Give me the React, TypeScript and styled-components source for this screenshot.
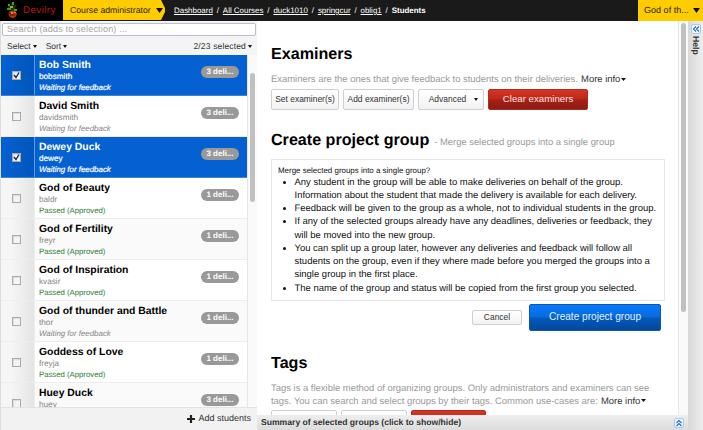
import React from "react";
import styled, { createGlobalStyle, css } from "styled-components";

const GlobalStyle = createGlobalStyle`
  * { box-sizing: border-box; }
  html, body { margin: 0; padding: 0; overflow: hidden; }
  body {
    font: 9.45px/13.2px "Liberation Sans", Arial, sans-serif;
    color: #222;
    background: #fff;
    text-rendering: geometricPrecision;
  }
`;

const Page = styled.div`
  width: 703px;
  height: 430px;
  display: flex;
  flex-direction: column;
  overflow: hidden;
  white-space: nowrap;
`;

const Header = styled.header`
  flex: 0 0 20px;
  display: flex;
  background: #1a1a1a;
  line-height: 20px;
`;

const Brand = styled.div`
  width: 63px;
  display: flex;
  background: #000;
  color: #b31616;
  font: 9.3px/21px "DejaVu Sans", sans-serif;
  svg { margin: 1px 4px 0 6px; flex: none; }
`;

const RoleTab = styled.div`
  width: 103px;
  padding: 0 0 1px 7px;
  display: flex;
  align-items: center;
  color: #2a2200;
  font-size: 8.7px;
  line-height: 19px;
  background: #fc0;
  clip-path: polygon(0 0, 98px 0, 102px 8px, 102px 12px, 98px 20px, 0 20px);
  svg { margin-left: 5px; }
`;

const Crumbs = styled.nav`
  flex: 1;
  padding-left: 8px;
  color: #fff;
  font-size: 7.95px;
  line-height: 21px;
  a { text-decoration: underline; }
  span { padding: 0 3.9px; }
`;

const UserTab = styled.div`
  width: 65px;
  padding: 0 0 1px 6px;
  display: flex;
  align-items: center;
  background: #fc0;
  color: #2a2200;
  font-size: 9.05px;
  line-height: 19px;
  svg { margin-left: 4px; }
`;

const Body = styled.div`
  flex: 1;
  min-height: 0;
  display: flex;
`;

const Sidebar = styled.aside`
  width: 257px;
  display: flex;
  flex-direction: column;
  background: #f4f4f4;
  border-left: 1px solid #ddd;
`;

const Search = styled.div`
  height: 13px;
  margin: 2px 1px 0;
  padding-left: 4px;
  border: 1px solid #b9bdcd;
  border-radius: 2px;
  background: #fff;
  color: #a5a5a5;
  font-size: 9.1px;
  line-height: 11px;
  letter-spacing: 0.15px;
`;

const Toolbar = styled.div`
  height: 20px;
  margin-bottom: -1px;
  padding: 1px 5px 0 6px;
  display: flex;
  align-items: center;
  gap: 9px;
  color: #333;
  font-size: 8.5px;
  > :last-child { margin-left: auto; letter-spacing: 0.15px; }
`;

const MenuLabel = styled.span`
  display: flex;
  align-items: center;
  svg { margin-left: 2px; }
`;

const ListArea = styled.div`
  flex: 1;
  min-height: 0;
  display: flex;
  overflow: hidden;
`;

const Rows = styled.div`
  width: 246px;
`;

const Row = styled.div<{ $selected: boolean; $alt: boolean }>`
  height: 41px;
  display: flex;
  border-bottom: 1px solid ${(p) => (p.$selected ? "#3c84d4" : "#ededed")};
  background: ${(p) => (p.$selected ? "#0561d2" : p.$alt ? "#fafafa" : "#fff")};
`;

const CheckCell = styled.div<{ $selected: boolean }>`
  width: 34px;
  display: flex;
  align-items: center;
  justify-content: center;
  padding-right: 2px;
  border-right: 1px solid ${(p) => (p.$selected ? "#5c9be6" : "#eee")};
  background: ${(p) =>
    p.$selected
      ? "linear-gradient(90deg, #0561d2, #0056bb)"
      : "linear-gradient(90deg, #f6f6f6 30%, #e4e4e4)"};
`;

const Box = styled.div`
  width: 9px;
  height: 9px;
  border: 1px solid #aaa;
  box-shadow: inset 1px 1px 1px #ddd;
  background: #f4f4f4;
  svg { display: block; }
`;

const Person = styled.div<{ $selected: boolean }>`
  flex: 1;
  padding: 4px 0 0 4px;
  color: ${(p) => (p.$selected ? "#fff" : "#858585")};
  font-size: 8.2px;
  line-height: 11px;
  -webkit-text-stroke: ${(p) => (p.$selected ? "0.2px #fff" : "0")};
`;

const Name = styled.div<{ $selected: boolean }>`
  height: 12px;
  color: ${(p) => (p.$selected ? "#fff" : "#000")};
  font-size: 10.4px;
  font-weight: bold;
  line-height: 13px;
  -webkit-text-stroke: 0;
`;

const Username = styled.div`
  height: 11px;
  line-height: 12px;
`;

const Status = styled.div<{ $passed: boolean }>`
  font-size: ${(p) => (p.$passed ? "7.75px" : "7.9px")};
  font-style: ${(p) => (p.$passed ? "normal" : "italic")};
  ${(p) => p.$passed && "color: #2c7d32;"}
`;

const Badge = styled.div`
  width: 38px;
  height: 12px;
  margin: 11px 8px 0 0;
  border-radius: 6px;
  background: #999;
  color: #fff;
  font-size: 8px;
  font-weight: bold;
  line-height: 12px;
  text-align: center;
`;

const Track = styled.div<{ $w: number; $top: number }>`
  width: ${(p) => p.$w}px;
  padding-top: ${(p) => p.$top}px;
  display: flex;
  justify-content: center;
  background: #fafafa;
  border-left: 1px solid #e6e6e6;
`;

const Thumb = styled.div<{ $h: number }>`
  width: 5px;
  height: ${(p) => p.$h}px;
  border-radius: 3px;
  background: #c1c1c1;
`;

const SideFooter = styled.div`
  height: 23px;
  padding-right: 6px;
  display: flex;
  align-items: center;
  justify-content: flex-end;
  gap: 3px;
  border-top: 1px solid #e3e3e3;
  background: #f2f2f2;
  color: #333;
  font-size: 9px;
`;

const Main = styled.main`
  width: 431px;
  display: flex;
  flex-direction: column;
`;

const ScrollArea = styled.div`
  flex: 1;
  min-height: 0;
  display: flex;
  overflow: hidden;
`;

const Content = styled.div`
  width: 421px;
  height: 395px;
  overflow: hidden;
  padding: 23px 13px 0 14px;
`;

const Heading = styled.h2<{ $top?: number }>`
  height: 20px;
  margin: ${(p) => p.$top ?? 0}px 0 0;
  color: #000;
  font-size: 16.1px;
  line-height: 20px;
  small {
    margin-left: 5px;
    color: #999;
    font-size: 9.4px;
    font-weight: normal;
  }
`;

const Intro = styled.p`
  margin: 9px 0 0;
  color: #999;
`;

const More = styled.span`
  margin-left: 0.5px;
  color: #333;
  svg { margin: 0 0 1px 1px; vertical-align: middle; }
`;

const ButtonRow = styled.div<{ $top: number }>`
  display: flex;
  gap: 4px;
  margin-top: ${(p) => p.$top}px;
`;

type Tone = "plain" | "red" | "blue";

const tones = {
  plain: css`
    border: 1px solid #cfcfcf;
    background: linear-gradient(#fff, #f3f3f3);
    color: #333;
    font-size: 8.45px;
  `,
  red: css`
    border: 1px solid #b52a1d;
    background: linear-gradient(#d93424, #bb281b 48%, #a52016 52%, #8c1c13);
    color: #f9e3e0;
    font-size: 9.7px;
  `,
  blue: css`
    border: 1px solid #0759b8;
    background: linear-gradient(#0a7af8, #056be2 48%, #0459bb 52%, #02479c);
    color: #e3f0ff;
    font-size: 10.1px;
  `,
};

const Button = styled.button<{ $w: number; $h?: number; $tone?: Tone }>`
  flex: none;
  width: ${(p) => p.$w}px;
  height: ${(p) => p.$h ?? 21}px;
  padding: 0 0 1px;
  display: flex;
  align-items: center;
  justify-content: center;
  border-radius: 2px;
  font-family: inherit;
  line-height: 12px;
  white-space: nowrap;
  ${(p) => tones[p.$tone ?? "plain"]}
  svg { margin: 0 -5px 0 8px; }
`;

const Notice = styled.section`
  width: 394px;
  height: 142px;
  margin-top: 9px;
  padding: 5px 0 0 6px;
  border: 1px solid #e6e6e6;
  color: #111;
`;

const Question = styled.div`
  height: 11px;
  font-size: 7.95px;
  line-height: 11px;
`;

const Bullets = styled.ul`
  margin: 0;
  padding: 0 0 0 16.5px;
  font-size: 9.47px;
  line-height: 13.25px;
`;

const Actions = styled.div`
  margin: 3px 4px 0 0;
  display: flex;
  justify-content: flex-end;
  align-items: center;
  gap: 7px;
`;

const Summary = styled.footer`
  height: 15px;
  padding: 0 4px;
  display: flex;
  align-items: center;
  justify-content: space-between;
  background: linear-gradient(#eee, #dcdcdc);
  color: #333;
  font-size: 8.6px;
  font-weight: bold;
`;

const HelpPanel = styled.aside`
  flex: 1;
  display: flex;
  flex-direction: column;
  align-items: center;
  padding: 3px 0 0;
  gap: 2px;
  background: linear-gradient(90deg, #d9d9d9, #ededed);
  color: #333;
  font-size: 8.7px;
  font-weight: bold;
  line-height: 11px;
`;

const VerticalLabel = styled.span`
  writing-mode: vertical-rl;
`;

const Chevrons = styled.span`
  width: 10px;
  height: 10px;
  display: flex;
  border: 1px solid #a9caee;
  border-radius: 2px;
  background: #edf5ff;
`;

const Caret = ({ w = 5, h = 3 }: { w?: number; h?: number }) => (
  <svg width={w} height={h} viewBox="0 0 10 6" preserveAspectRatio="none">
    <path d="M0 0h10L5 6z" fill="#111" />
  </svg>
);

const DoubleChevron = ({ d }: { d: string }) => (
  <Chevrons>
    <svg width="8" height="8" viewBox="0 0 8 8">
      <path d={d} fill="none" stroke="#286bb4" strokeWidth="1.1" />
    </svg>
  </Chevrons>
);

const Logo = () => (
  <svg width="13" height="18" viewBox="0 0 13 18">
    <path d="M5 10C2 7 1 5 2 3l3 2 1-4 2 4 3-2-2 4 1 3z" fill="#173d13" />
    <path d="M2 3h2v2H2zM6 1h2v3H6zM1 7h4v2H1zM8 8h3v2H8z" fill="#459c2a" />
    <path d="M4 5h3v2H4z" fill="#8db51f" />
    <path d="M4 10c-3 3-1 7 3 7 4-1 5-5 2-7z" fill="#c82d10" />
    <path d="M5 11h2v2H5zM8 11h2v1H8z" fill="#ef7b2d" />
    <path d="M4 14h5M3 12l2 1" stroke="#471108" />
  </svg>
);

const Checkbox = ({ checked }: { checked: boolean }) => (
  <Box>
    {checked && (
      <svg width="7" height="7" viewBox="0 0 7 7">
        <path d="M1 3l2 2.5L6 .5" fill="none" stroke="#17266b" strokeWidth="1.4" />
      </svg>
    )}
  </Box>
);

const students = [
  { name: "Bob Smith", user: "bobsmith", count: 3, selected: true },
  { name: "David Smith", user: "davidsmith", count: 3 },
  { name: "Dewey Duck", user: "dewey", count: 3, selected: true },
  { name: "God of Beauty", user: "baldr", count: 1, passed: true },
  { name: "God of Fertility", user: "freyr", count: 1, passed: true },
  { name: "God of Inspiration", user: "kvasir", count: 1, passed: true },
  { name: "God of thunder and Battle", user: "thor", count: 1 },
  { name: "Goddess of Love", user: "freyja", count: 1, passed: true },
  { name: "Huey Duck", user: "huey", count: 3 },
];

const crumbs = ["Dashboard", "All Courses", "duck1010", "springcur", "oblig1"];

export default function App() {
  return (
    <Page>
      <GlobalStyle />
      <Header>
        <Brand><Logo />Devilry</Brand>
        <RoleTab>Course administrator <Caret w={7} h={5} /></RoleTab>
        <Crumbs>
          {crumbs.map((c) => (
            <React.Fragment key={c}><a>{c}</a><span>/</span></React.Fragment>
          ))}
          <b>Students</b>
        </Crumbs>
        <UserTab>God of th... <Caret w={7} h={5} /></UserTab>
      </Header>
      <Body>
        <Sidebar>
          <Search>Search (adds to selection) ...</Search>
          <Toolbar>
            <MenuLabel>Select<Caret w={4} /></MenuLabel>
            <MenuLabel>Sort<Caret w={4} /></MenuLabel>
            <MenuLabel>2/23 selected<Caret w={4} /></MenuLabel>
          </Toolbar>
          <ListArea>
            <Rows>
              {students.map((s, i) => (
                <Row key={s.user} $selected={!!s.selected} $alt={i % 2 === 0}>
                  <CheckCell $selected={!!s.selected}><Checkbox checked={!!s.selected} /></CheckCell>
                  <Person $selected={!!s.selected}>
                    <Name $selected={!!s.selected}>{s.name}</Name>
                    <Username>{s.user}</Username>
                    <Status $passed={!!s.passed}>{s.passed ? "Passed (Approved)" : "Waiting for feedback"}</Status>
                  </Person>
                  <Badge>{s.count} deli...</Badge>
                </Row>
              ))}
            </Rows>
            <Track $w={10} $top={18}><Thumb $h={129} /></Track>
          </ListArea>
          <SideFooter>
            <svg width="8" height="8" viewBox="0 0 8 8"><path d="M4 0v8M0 4h8" stroke="#222" strokeWidth="2.2" /></svg>
            Add students
          </SideFooter>
        </Sidebar>
        <Main>
          <ScrollArea>
            <Content>
              <Heading>Examiners</Heading>
              <Intro>
                Examiners are the ones that give feedback to students on their deliveries. <More>More info<Caret /></More>
              </Intro>
              <ButtonRow $top={3}>
                <Button $w={68}>Set examiner(s)</Button>
                <Button $w={71}>Add examiner(s)</Button>
                <Button $w={66}>Advanced<Caret w={4} /></Button>
                <Button $w={100} $tone="red">Clear examiners</Button>
              </ButtonRow>
              <Heading $top={19.5}>
                Create project group<small>- Merge selected groups into a single group</small>
              </Heading>
              <Notice>
                <Question>Merge selected groups into a single group?</Question>
                <Bullets>
                  <li>Any student in the group will be able to make deliveries on behalf of the group.<br />Information about the student that made the delivery is available for each delivery.</li>
                  <li>Feedback will be given to the group as a whole, not to individual students in the group.</li>
                  <li>If any of the selected groups already have any deadlines, deliveries or feedback, they<br />will be moved into the new group.</li>
                  <li>You can split up a group later, however any deliveries and feedback will follow all<br />students on the group, even if they where made before you merged the groups into a<br />single group in the first place.</li>
                  <li>The name of the group and status will be copied from the first group you selected.</li>
                </Bullets>
              </Notice>
              <Actions>
                <Button $w={50} $h={15}>Cancel</Button>
                <Button $w={132} $h={27} $tone="blue">Create project group</Button>
              </Actions>
              <Heading $top={22}>Tags</Heading>
              <Intro>
                Tags is a flexible method of organizing groups. Only administrators and examiners can see<br />
                tags. You can search and select groups by their tags. Common use-cases are: <More>More info<Caret /></More>
              </Intro>
              <ButtonRow $top={2}>
                <Button $w={66}>Set tag(s)</Button>
                <Button $w={66}>Add tag(s)</Button>
                <Button $w={75} $tone="red">Clear tags</Button>
              </ButtonRow>
            </Content>
            <Track $w={10} $top={2}><Thumb $h={289} /></Track>
          </ScrollArea>
          <Summary>
            Summary of selected groups (click to show/hide)
            <DoubleChevron d="M1.5 4L4 1.5 6.5 4M1.5 7L4 4.5 6.5 7" />
          </Summary>
        </Main>
        <HelpPanel>
          <DoubleChevron d="M4 1.5L1.5 4 4 6.5M7 1.5L4.5 4 7 6.5" />
          <VerticalLabel>Help</VerticalLabel>
        </HelpPanel>
      </Body>
    </Page>
  );
}
